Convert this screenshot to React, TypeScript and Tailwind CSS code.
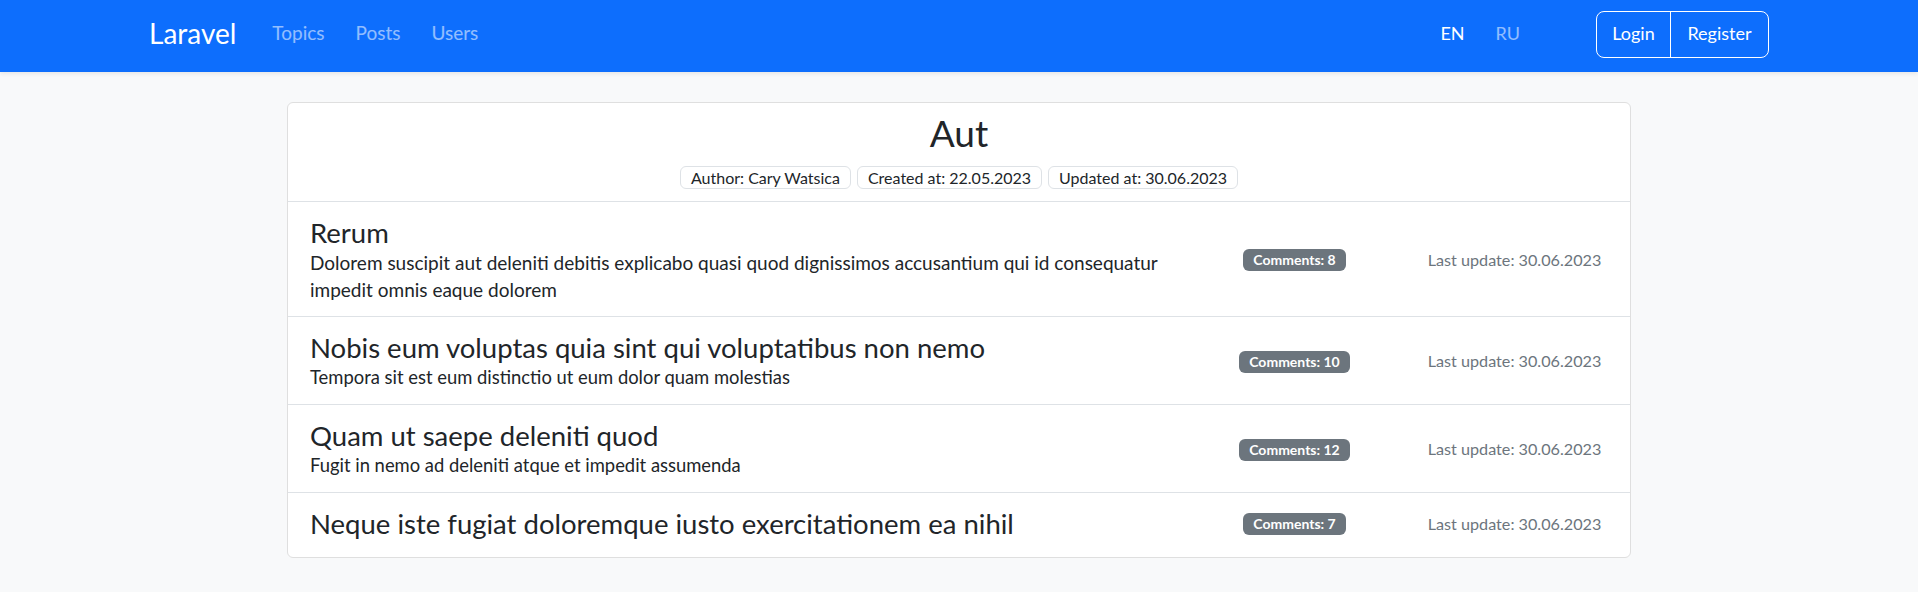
import React from "react"

type Post = {
  title: string
  body?: string
  comments: number
  updated: string
}

const posts: Post[] = [
  {
    title: "Rerum",
    body: "Dolorem suscipit aut deleniti debitis explicabo quasi quod dignissimos accusantium qui id consequatur impedit omnis eaque dolorem",
    comments: 8,
    updated: "30.06.2023",
  },
  {
    title: "Nobis eum voluptas quia sint qui voluptatibus non nemo",
    body: "Tempora sit est eum distinctio ut eum dolor quam molestias",
    comments: 10,
    updated: "30.06.2023",
  },
  {
    title: "Quam ut saepe deleniti quod",
    body: "Fugit in nemo ad deleniti atque et impedit assumenda",
    comments: 12,
    updated: "30.06.2023",
  },
  {
    title: "Neque iste fugiat doloremque iusto exercitationem ea nihil",
    comments: 7,
    updated: "30.06.2023",
  },
]

function Navbar() {
  return (
    <nav className="h-[72px] bg-[#0d6efd] shadow-[0_2px_4px_rgba(0,0,0,0.075)]">
      <div className="w-[1620px] mx-auto h-full flex items-center">
        <a className="text-[28px] text-white leading-none mb-[6px]">Laravel</a>
        <ul className="flex gap-[31px] ml-[36px] text-[19px] text-white/55 mb-[5px]">
          <li>Topics</li>
          <li>Posts</li>
          <li>Users</li>
        </ul>
        <ul className="flex gap-[31px] ml-auto text-[18px] mb-[5px]">
          <li className="text-white">EN</li>
          <li className="text-white/55">RU</li>
        </ul>
        <div className="flex ml-[76px] h-[47px] border border-white rounded-[8px] text-[18px] text-white mb-[4px]">
          <button className="w-[74px] flex items-center justify-center border-r border-white pb-[2px]">Login</button>
          <button className="w-[97px] flex items-center justify-center pb-[2px]">Register</button>
        </div>
      </div>
    </nav>
  )
}

function PostRow({ post, first, last }: { post: Post; first: boolean; last: boolean }) {
  return (
    <li
      className={`grid grid-cols-[884px_225px_1fr] items-center pl-[10px] pr-[8px] pt-[15px] ${post.body ? "pb-[13px]" : "pb-[17px]"} ${last ? "" : "border-b border-[#dee2e6]"}`}
    >
      <div className="px-[12px]">
        <h3 className="text-[27.5px] leading-[32px] text-[#212529]">{post.title}</h3>
        {post.body && (
          <p className={`${first ? "text-[19px]" : "text-[18.4px]"} leading-[27px] text-[#212529]`}>{post.body}</p>
        )}
      </div>
      <div className="flex justify-center">
        <span className="bg-[#6c757d] text-white font-bold text-[14px] leading-[22px] px-[10px] rounded-[6px]">
          Comments: {post.comments}
        </span>
      </div>
      <div className="text-center text-[16.2px] text-[#6c757d]">Last update: {post.updated}</div>
    </li>
  )
}

export default function App() {
  return (
    <div className="min-h-screen bg-[#f8f9fa] font-['Lato',sans-serif] text-[#212529]">
      <Navbar />
      <main className="pt-[30px] pb-[34px]">
        <div className="w-[1344px] mx-auto bg-white border border-[#dfdfdf] rounded-[6px]">
          <div className="flex flex-col items-center pt-[8px] pb-[12px] border-b border-[#dee2e6]">
            <h1 className="text-[37px] leading-[44px]">Aut</h1>
            <div className="flex gap-[6px] mt-[11px]">
              {["Author: Cary Watsica", "Created at: 22.05.2023", "Updated at: 30.06.2023"].map((t) => (
                <span key={t} className="border border-[#dee2e6] rounded-[6px] px-[10px] text-[16px] leading-[21px]">
                  {t}
                </span>
              ))}
            </div>
          </div>
          <ul>
            {posts.map((p, i) => (
              <PostRow key={p.title} post={p} first={i === 0} last={i === posts.length - 1} />
            ))}
          </ul>
        </div>
      </main>
    </div>
  )
}
